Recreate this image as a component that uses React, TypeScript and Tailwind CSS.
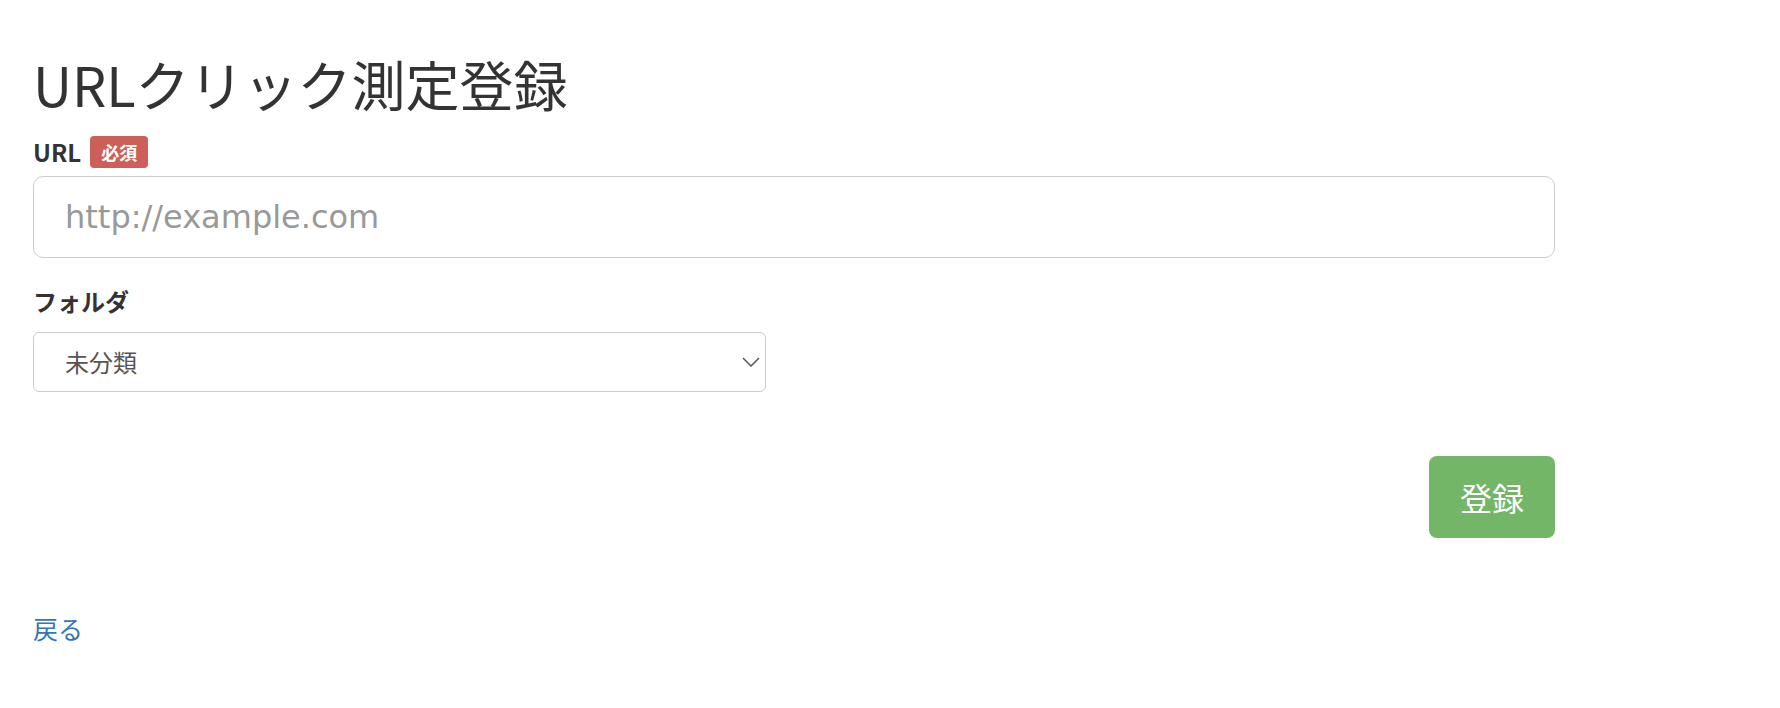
const jp = "font-['Noto_Sans_CJK_JP','Noto_Sans',sans-serif]";

const Field = ({ children }: { children: React.ReactNode }) => (
  <div className="flex flex-col">{children}</div>
);

export default function App() {
  return (
    <div className={`min-h-[708px] bg-white px-[33px] pt-[54px] ${jp}`}>
      <div className="w-[1522px]">
        <h1 className="text-[54px] leading-[60px] font-normal text-[#333]">
          URLクリック測定登録
        </h1>

        <Field>
          <div className="mt-[22px] flex h-[32px] items-center gap-[9px]">
            <label className="text-[24px] leading-[32px] font-bold text-[#333]">URL</label>
            <span className="flex h-[32px] items-center rounded-[4px] bg-[#cc5f58] px-[11px] text-[18px] font-bold text-white">
              必須
            </span>
          </div>
          <input
            type="text"
            placeholder="http://example.com"
            className="mt-[8px] h-[82px] w-full rounded-[10px] border border-[#ccc] px-[31px] font-['DejaVu_Sans',sans-serif] text-[32px] text-[#555] placeholder:text-[#999] focus:outline-none"
          />
        </Field>

        <Field>
          <label className="mt-[27px] text-[24px] leading-[32px] font-bold text-[#333]">フォルダ</label>
          <div className="relative mt-[15px] w-[733px]">
            <select className="h-[60px] w-full appearance-none rounded-[6px] border border-[#ccc] bg-white px-[31px] text-[24px] text-[#555] focus:outline-none">
              <option>未分類</option>
            </select>
            <svg
              viewBox="0 0 18 10"
              className="pointer-events-none absolute top-1/2 right-[6px] h-[10px] w-[18px] -translate-y-1/2"
              fill="none"
              stroke="#555"
              strokeWidth="1.5"
            >
              <polyline points="1,1 9,9 17,1" />
            </svg>
          </div>
        </Field>

        <div className="mt-[64px] flex justify-end">
          <button className="h-[82px] w-[126px] rounded-[8px] bg-[#73b667] text-[32px] text-white">
            登録
          </button>
        </div>

        <a href="#" className="mt-[74px] block text-[25px] leading-[32px] text-[#3476b5]">
          戻る
        </a>
      </div>
    </div>
  );
}
